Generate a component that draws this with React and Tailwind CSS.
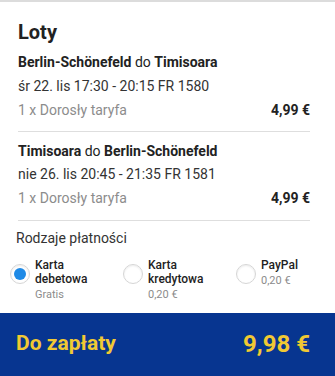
const FLIGHTS = [
  {
    from: "Berlin-Schönefeld",
    to: "Timisoara",
    when: "śr 22. lis 17:30 - 20:15 FR 1580",
    fare: "1 x Dorosły taryfa",
    price: "4,99 €",
  },
  {
    from: "Timisoara",
    to: "Berlin-Schönefeld",
    when: "nie 26. lis 20:45 - 21:35 FR 1581",
    fare: "1 x Dorosły taryfa",
    price: "4,99 €",
  },
];

const PAYMENTS = [
  { label: ["Karta", "debetowa"], fee: "Gratis", selected: true },
  { label: ["Karta", "kredytowa"], fee: "0,20 €", selected: false },
  { label: ["PayPal"], fee: "0,20 €", selected: false },
];

const Radio = ({ selected }) => (
  <span className="w-5 h-5 shrink-0 rounded-full border border-[#d6d6d6] bg-white shadow-[inset_0_1px_2px_rgba(0,0,0,0.08)] flex items-center justify-center">
    {selected && <span className="w-[12px] h-[12px] rounded-full bg-[#1f8ae6]" />}
  </span>
);

const App = () => {
  return (
    <div className="w-[335px] h-[376px] bg-white border-t-2 border-[#dcdcdc] flex flex-col font-['Roboto',sans-serif] text-[#222] overflow-hidden">
      <div className="pl-[18px] pr-[25px] pt-4">
        <h1 className="text-[20px] leading-[28px] font-bold text-[#222] mb-1">Loty</h1>

        {FLIGHTS.map((f, i) => (
          <div key={i} className={i === 0 ? "pb-[9px] border-b border-[#dedede]" : "pt-[7px] pb-[10px] border-b border-[#dedede]"}>
            <p className="text-[14px] leading-[24px]">
              <span className="font-bold">{f.from}</span> do{" "}
              <span className="font-bold">{f.to}</span>
            </p>
            <p className={`text-[14px] ${i === 0 ? "leading-[24px]" : "leading-[23px]"} text-[#333]`}>{f.when}</p>
            <div className="flex items-center justify-between text-[14px] leading-[24px]">
              <span className="text-[#8c8c8c]">{f.fare}</span>
              <span className="font-bold">{f.price}</span>
            </div>
          </div>
        ))}
      </div>

      <div className="pl-4 pt-[5px]">
        <p className="text-[14px] leading-[24px] text-[#333]">Rodzaje płatności</p>
      </div>

      <div className="flex pl-[10px] pt-[8px]">
        {PAYMENTS.map((p, i) => (
          <div key={i} className="w-[113px] shrink-0 flex items-start gap-[5px]">
            <div className="pt-[6px]">
              <Radio selected={p.selected} />
            </div>
            <div className="flex flex-col">
              {p.label.map((l) => (
                <span key={l} className="text-[12px] leading-[14px] font-medium text-[#222]">
                  {l}
                </span>
              ))}
              <span className="text-[11px] leading-[16px] mt-[1px] text-[#8c8c8c]">{p.fee}</span>
            </div>
          </div>
        ))}
      </div>

      <div className="mt-auto h-[63px] bg-[#073590] flex items-center justify-between pl-4 pr-[25px] pb-[2px]">
        <span className="text-[21px] font-bold text-[#f1c933]">Do zapłaty</span>
        <span className="text-[24px] font-bold text-[#f1c933]">9,98 €</span>
      </div>
    </div>
  );
};

export default App;
